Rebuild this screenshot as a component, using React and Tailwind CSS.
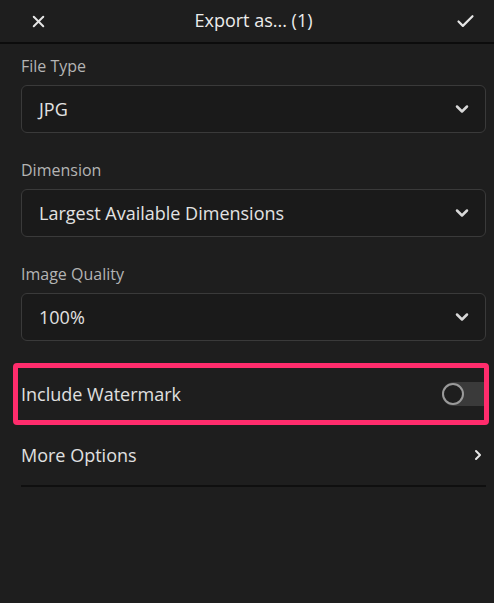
import { X, Check, ChevronDown, ChevronRight } from 'lucide-react'

const font = { fontFamily: '"Open Sans", "Noto Sans", sans-serif' }

function SelectField({ label, value }) {
  return (
    <div className="flex flex-col">
      <div className="text-[16px] text-[#b4b4b4] leading-5 mb-[9px]">{label}</div>
      <div className="h-[48px] rounded-[6px] border border-[#3a3a3a] bg-[#1a1a1a] flex items-center justify-between pl-[17px] pr-[13px]">
        <span className="text-[18px] text-[#e2e2e2]">{value}</span>
        <ChevronDown className="w-[20px] h-[20px] text-[#d8d8d8]" strokeWidth={3} />
      </div>
    </div>
  )
}

export default function App() {
  return (
    <div className="w-[494px] h-[603px] bg-[#1e1e1e] flex flex-col overflow-hidden" style={font}>
      {/* header */}
      <div className="h-[44px] flex items-center justify-between px-[29px] pr-[18px] border-b-2 border-[#0c0c0c]">
        <X className="w-[19px] h-[19px] text-[#e6e6e6]" strokeWidth={2.5} />
        <div className="text-[18px] text-[#ececec] -mt-[2px] ml-[4px]">Export as... (1)</div>
        <Check className="w-[21px] h-[21px] text-[#e6e6e6]" strokeWidth={2.5} />
      </div>

      <div className="flex flex-col px-[21px] pr-[8px] pt-[12px] gap-[27px]">
        <SelectField label="File Type" value="JPG" />
        <SelectField label="Dimension" value="Largest Available Dimensions" />
        <SelectField label="Image Quality" value="100%" />
      </div>

      <div className="mx-[13px] mr-[5px] mt-[22px] h-[62px] border-[5px] border-[#ff2c6c] rounded-[4px] flex items-center justify-between pl-[3px]">
        <span className="text-[18px] text-[#e0e0e0]">Include Watermark</span>
        <div className="w-[42px] h-[24px] rounded-l-full bg-[#3a3a3a] flex items-center">
          <div className="w-[22px] h-[22px] rounded-full border-2 border-[#9a9a9a] bg-[#1e1e1e]" />
        </div>
      </div>

      <div className="mx-[21px] mr-[8px] h-[62px] flex items-center justify-between border-b-2 border-[#0f0f0f]">
        <span className="text-[18px] text-[#e0e0e0]">More Options</span>
        <ChevronRight className="w-[16px] h-[16px] text-[#e6e6e6]" strokeWidth={3} />
      </div>
    </div>
  )
}
